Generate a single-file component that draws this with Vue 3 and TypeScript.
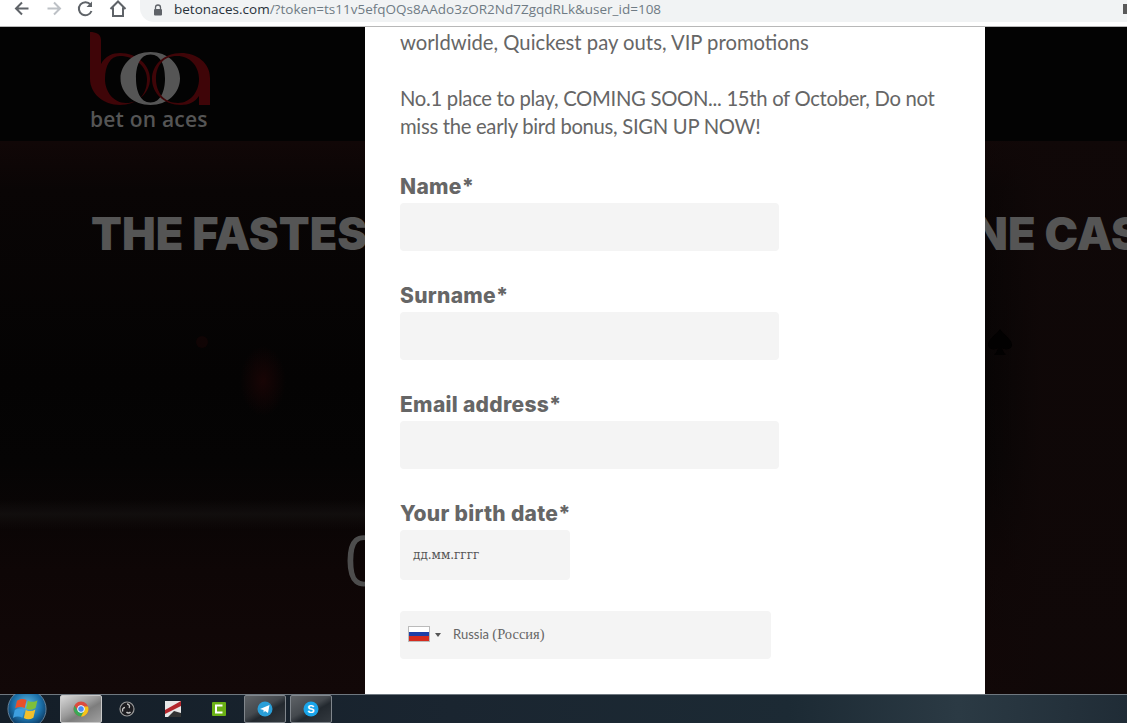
<template>
  <div class="screen">
    <header class="toolbar">
      <div class="nav-icons">
        <svg width="18" height="18" viewBox="0 0 18 18" class="nav-icon"><path d="M15.5 8.5H4M9 2.5 3 8.500l6 6" fill="none" stroke="#5f6368" stroke-width="2"/></svg>
        <svg width="18" height="18" viewBox="0 0 18 18" class="nav-icon"><path d="M2.5 8.5H14M9 2.5l6 6-6 6" fill="none" stroke="#bdc1c6" stroke-width="2"/></svg>
        <svg width="18" height="18" viewBox="0 0 18 18" class="nav-icon"><path d="M14.5 11a6.500 6.500 0 1 1-1-6.300" fill="none" stroke="#5f6368" stroke-width="2"/><path d="M15 1.500V7H9.500z" fill="#5f6368"/></svg>
        <svg width="18" height="18" viewBox="0 0 18 18" class="nav-icon"><path d="M1.500 9 9 1.500 16.500 9M4 7.500V16h10V7.500" fill="none" stroke="#5f6368" stroke-width="2"/></svg>
      </div>
      <div class="omnibox">
        <svg width="10" height="12" viewBox="0 0 10 12" class="lock"><path d="M2.500 5V3.500a2.500 2.500 0 0 1 5 0V5" fill="none" stroke="#5f6368" stroke-width="1.300"/><rect x="1" y="5" width="8" height="6.500" rx="1" fill="#5f6368"/></svg>
        <span class="url"><span class="host">betonaces.com</span>/?token=ts11v5efqOQs8AAdo3zOR2Nd7ZgqdRLk&amp;user_id=108</span>
        <span class="ext-stub"></span>
      </div>
    </header>

    <main class="stage">
      <section class="site-top">
        <div class="logo">
          <svg width="122" height="76" viewBox="0 0 122 76">
            <path fill="#3f0508" fill-rule="evenodd" d="M0 0c6 0 11 2 11 8v24c4-8 12-11 19-11 17 0 30 12 30 26S47 73 30 73 0 61 0 47zM30 24c-10 0-15 10-15 23s9 24 21 24c14 0 21-10 21-24 0-13-13-23-27-23z" />
            <path fill="#555" fill-rule="evenodd" d="M60.500 20c-17 0-30 12-30 26.500S43.500 73 60.500 73s29.500-12 29.500-26.500S77.500 20 60.500 20zm0 2.500c11 0 14.500 12 14.500 24S71 70.500 60.500 70.500 46 58.500 46 46.500s3.500-24 14.500-24z" />
            <path fill="#3f0508" fill-rule="evenodd" d="M91 21c-17 0-29 12-29 26s12 26 29 26c8 0 14-3 18-9v9h11V46c0-15-13-25-29-25zm-4 3c-14 0-21 10-21 23s8 24 22 24c12 0 21-11 21-24S100 24 87 24z" />
          </svg>
          <span class="logo-text">bet on aces</span>
        </div>
      </section>
      <section class="site-hero">
        <h1 class="headline"><span>THE FASTEST</span><span class="headline-end">ONLINE CASINO</span></h1>
        <div class="countdown first">0</div>
        <div class="countdown last">5</div>
        <svg class="spade" width="26" height="28" viewBox="0 0 26 28"><path d="M13 1C9 7 1 11 1 17c0 4 6 6 10 3-1 3-2 5-4 7h12c-2-2-3-4-4-7 4 3 10 1 10-3C25 11 17 7 13 1z" fill="#020101"/></svg>
        <div class="ember"></div>
        <div class="spark"></div>
        <div class="streak"></div>
      </section>

      <form class="modal" @submit.prevent>
        <div class="modal-inner">
          <p class="intro">worldwide, Quickest pay outs, VIP promotions</p>
          <p class="intro second">No.1 place to play, COMING SOON... 15th of October, Do not miss the early bird bonus, SIGN UP NOW!</p>
          <div v-for="field in fields" :key="field" class="field">
            <label class="field-label">{{ field }}*</label>
            <input class="field-input" type="text" />
          </div>
          <div class="field">
            <label class="field-label">Your birth date*</label>
            <div class="date-input">дд.мм.гггг</div>
          </div>
          <div class="country">
            <span class="flag"><i class="white"></i><i class="blue"></i><i class="red"></i></span>
            <span class="caret"></span>
            <span class="country-name">Russia <span class="native">(Россия)</span></span>
          </div>
        </div>
      </form>
    </main>

    <footer class="taskbar">
      <div class="start">
        <svg width="40" height="40" viewBox="0 0 44 44">
          <defs>
            <radialGradient id="orb" cx="50%" cy="40%" r="62%">
              <stop offset="0" stop-color="#5fb9e0" />
              <stop offset="0.6" stop-color="#1b6fa8" />
              <stop offset="1" stop-color="#0b2f52" />
            </radialGradient>
          </defs>
          <circle cx="22" cy="22" r="21" fill="url(#orb)" stroke="#7f9bb0" stroke-width="0.800" />
          <path d="M11 13c4-2.500 7-2.500 10.500-.8L19.500 21c-3.500-1.800-7-1.800-10.500.3z" fill="#e8502a" />
          <path d="M23 12.800c3.500 1.800 7 1.800 10.500-.5L31.500 21c-3.500 2.200-7 2.200-10.500.4z" fill="#7fbf3a" />
          <path d="M8.600 23c3.500-2 7-2 10.500-.3L17 31.500c-3.500-1.800-7-1.800-10.500.3z" fill="#3d9fe0" />
          <path d="M20.700 23c3.500 1.800 7 1.800 10.500-.4L29 31.500c-3.500 2.200-7 2.200-10.500.4z" fill="#f3c02c" />
        </svg>
      </div>
      <div class="task active">
        <svg width="16" height="16" viewBox="0 0 16 16">
          <circle cx="8" cy="8" r="7.500" fill="#dd4b3e" />
          <path d="M8 15.500A7.500 7.500 0 0 0 15 5.500H8z" fill="#f5c518" />
          <path d="M1.500 4.500A7.500 7.500 0 0 0 8 15.500l3-5.500H5z" fill="#3aa757" />
          <circle cx="8" cy="8" r="3.400" fill="#4a8af4" stroke="#fff" stroke-width="1" />
        </svg>
      </div>
      <div class="task">
        <svg width="16" height="16" viewBox="0 0 16 16">
          <circle cx="8" cy="8" r="7" fill="#1c1c20" stroke="#9a9a9a" stroke-width="1.200" />
          <path d="M8 3a2.500 2.500 0 0 1 2 4M11.500 11a2.500 2.500 0 0 1-4 0M4 10.500a2.500 2.500 0 0 1 2-4" fill="none" stroke="#c4c4c4" stroke-width="1.300" />
        </svg>
      </div>
      <div class="task">
        <svg width="16" height="16" viewBox="0 0 16 16">
          <rect width="16" height="16" fill="#e8e8e8" />
          <path d="M0 9 16 0v5L0 13z" fill="#b3262c" />
          <path d="M3 16l6-6 7 2v4z" fill="#333" />
        </svg>
      </div>
      <div class="task">
        <svg width="16" height="16" viewBox="0 0 16 16">
          <rect x="1" y="1" width="14" height="14" rx="1" fill="#6ab014" />
          <path d="M11.500 4.500H5v7h6.500" fill="none" stroke="#fff" stroke-width="2" />
        </svg>
      </div>
      <div class="task boxed">
        <svg width="16" height="16" viewBox="0 0 16 16">
          <circle cx="8" cy="8" r="7.500" fill="#2a9fd8" />
          <path d="M3 8 12.500 4l-1.500 8-3-2-1.300 1.500L6.500 9z" fill="#fff" />
        </svg>
      </div>
      <div class="task boxed">
        <svg width="16" height="16" viewBox="0 0 16 16">
          <circle cx="8" cy="8" r="7.500" fill="#1aa5ea" />
          <text x="8" y="12" text-anchor="middle" class="skype">S</text>
        </svg>
      </div>
    </footer>
  </div>
</template>

<script setup lang="ts">
const fields: string[] = ['Name', 'Surname', 'Email address']
</script>

<style>
html,
body {
  margin: 0;
  overflow: hidden;
}
</style>

<style scoped>
.screen {
  width: 1127px;
  height: 723px;
  display: flex;
  flex-direction: column;
  overflow: hidden;
  font-family: "Noto Sans", sans-serif;
}

.toolbar {
  flex: 0 0 27px;
  box-sizing: border-box;
  display: flex;
  background: #fff;
  border-bottom: 1px solid #b8b8b8;
  overflow: hidden;
}

.nav-icons {
  display: flex;
  align-items: flex-start;
  gap: 14px;
  padding: 0 0 0 13px;
  width: 128px;
  box-sizing: border-box;
}

.nav-icon {
  flex: none;
}

.omnibox {
  margin-left: 12px;
  flex: 1;
  height: 22px;
  background: #f1f3f4;
  border-radius: 0 0 0 14px;
  display: flex;
  align-items: center;
  padding-left: 13px;
  box-sizing: border-box;
  font-family: "Open Sans", sans-serif;
  font-size: 13.5px;
  color: #6f7b84;
}

.lock {
  flex: none;
  margin-right: 11px;
  margin-top: -3px;
}

.url {
  margin-top: -5px;
  white-space: nowrap;
}

.host {
  color: #28323a;
}

.ext-stub {
  width: 4px;
  height: 10px;
  margin-left: auto;
  margin-top: -4px;
  background: #5a5a5a;
  flex: none;
}

.stage {
  flex: 1;
  position: relative;
  min-height: 0;
  display: flex;
  flex-direction: column;
  background: #0b0506;
}

.site-top {
  flex: 0 0 114px;
  background: #030303;
  padding: 5px 0 0 90px;
  box-sizing: border-box;
}

.logo {
  width: 122px;
  display: flex;
  flex-direction: column;
}

.logo-text {
  font-family: "Open Sans", sans-serif;
  font-size: 21px;
  line-height: 22px;
  font-weight: 600;
  letter-spacing: 0.2px;
  color: #555;
  white-space: nowrap;
}

.site-hero {
  flex: 1;
  position: relative;
  overflow: hidden;
  background:
    linear-gradient(90deg, transparent 960px, rgba(16, 8, 8, 0.9) 1040px),
    linear-gradient(180deg, #110707 0, #090505 50px, #040303 240px, #050404 320px, #0e0606 430px, #120808 553px);
}

.headline {
  margin: 66px 0 0 91px;
  display: flex;
  font-family: Inter, sans-serif;
  font-size: 45px;
  line-height: 54px;
  font-weight: 900;
  color: #555;
  white-space: nowrap;
}

.headline-end {
  margin-left: 467px;
}

.countdown {
  position: absolute;
  top: 378px;
  font-family: "Open Sans", sans-serif;
  font-size: 70px;
  line-height: 80px;
  font-weight: 400;
  color: #4d4d4d;
}

.first {
  left: 344px;
}

.last {
  left: 948px;
}

.spade {
  position: absolute;
  left: 987px;
  top: 187px;
}

.ember {
  position: absolute;
  left: 240px;
  top: 205px;
  width: 46px;
  height: 70px;
  background: radial-gradient(closest-side, rgba(70, 8, 10, 0.3), transparent);
}

.spark {
  position: absolute;
  left: 196px;
  top: 195px;
  width: 12px;
  height: 12px;
  border-radius: 50%;
  background: rgba(60, 8, 10, 0.2);
}

.streak {
  position: absolute;
  left: 0;
  top: 358px;
  width: 365px;
  height: 30px;
  background: linear-gradient(180deg, transparent, rgba(40, 40, 38, 0.25) 50%, transparent);
}

.modal {
  position: absolute;
  left: 365px;
  top: 0;
  width: 620px;
  height: 667px;
  background: #fff;
  overflow: hidden;
}

.modal-inner {
  padding: 1px 35px 0;
}

.intro {
  margin: 0;
  font-family: Lato, sans-serif;
  font-size: 20.25px;
  line-height: 28px;
  color: #666;
  width: 560px;
}

.second {
  margin-top: 28px;
  letter-spacing: -0.3px;
}

.field {
  margin-top: 31px;
}

.second + .field {
  margin-top: 33px;
}

.field-label {
  display: block;
  margin-bottom: 2px;
  font-family: Inter, sans-serif;
  font-size: 21px;
  line-height: 28px;
  font-weight: 800;
  letter-spacing: 0.3px;
  color: #666;
}

.field-input {
  display: block;
  width: 379px;
  height: 48px;
  box-sizing: border-box;
  border: 0;
  background: #f4f4f4;
  border-radius: 4px;
}

.date-input {
  width: 170px;
  height: 50px;
  background: #f4f4f4;
  border-radius: 4px;
  font-family: "DejaVu Serif", serif;
  font-size: 12px;
  line-height: 50px;
  color: #555;
  padding-left: 13px;
  box-sizing: border-box;
}

.country {
  margin-top: 31px;
  width: 371px;
  height: 48px;
  background: #f4f4f4;
  border-radius: 4px;
  display: flex;
  align-items: center;
  padding-left: 8px;
  box-sizing: border-box;
}

.flag {
  width: 22px;
  height: 16px;
  display: flex;
  flex-direction: column;
  border: 1px solid #bbb;
  box-sizing: border-box;
  margin-top: -2px;
}

.flag i {
  flex: 1;
  display: block;
}

.white {
  background: #fff;
}

.blue {
  background: #1c3fa8;
}

.red {
  background: #d52b1e;
}

.caret {
  width: 0;
  height: 0;
  margin-left: 5px;
  border-left: 3px solid transparent;
  border-right: 3px solid transparent;
  border-top: 4px solid #555;
}

.country-name {
  margin-left: 12px;
  margin-top: -2px;
  font-family: Lato, sans-serif;
  font-size: 13px;
  color: #666;
}

.native {
  font-family: "Liberation Serif", serif;
  font-size: 14.5px;
}

.taskbar {
  flex: 0 0 29px;
  box-sizing: border-box;
  display: flex;
  align-items: stretch;
  border-top: 1px solid #6f7880;
  background: linear-gradient(90deg, #141e28 0, #1a2530 40%, #1c2a34 70%, #2b3a44 85%, #202c36 100%);
}

.start {
  width: 60px;
  height: 28px;
  flex: none;
  overflow: visible;
}

.start svg {
  display: block;
  margin: -6px 0 0 7px;
}

.task {
  width: 42px;
  flex: none;
  margin-right: 4px;
  display: flex;
  align-items: center;
  justify-content: center;
  box-sizing: border-box;
}

.active {
  background: linear-gradient(150deg, #d8d8d8 0, #9a9a9a 45%, #7d7d7d 60%, #a0a0a0 100%);
  border: 1px solid #c8c8c8;
  border-radius: 2px;
}

.boxed {
  background: linear-gradient(150deg, #5f6367 0, #44494e 45%, #23292f 60%, #33393f 100%);
  border: 1px solid #80868c;
  border-radius: 2px;
}

.skype {
  font-family: "Liberation Sans", sans-serif;
  font-size: 11px;
  font-weight: 700;
  fill: #fff;
}
</style>
